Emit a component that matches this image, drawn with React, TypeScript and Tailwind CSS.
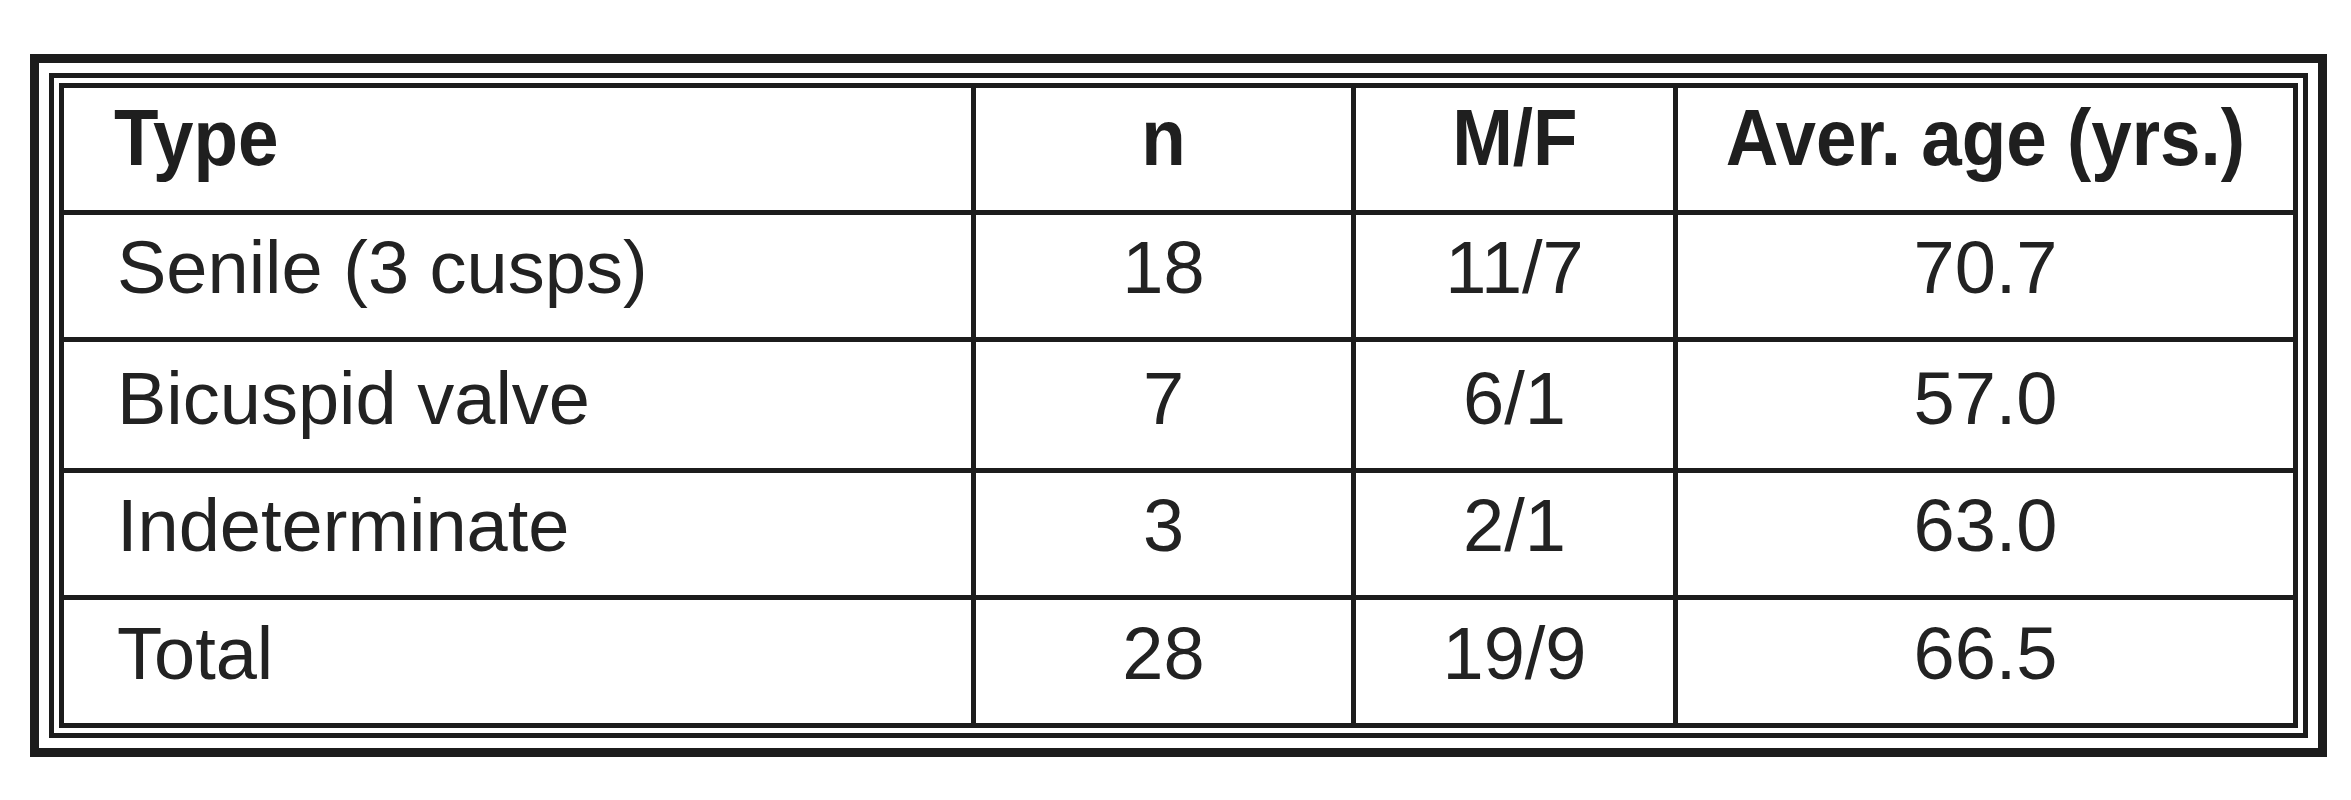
const rows = [
  { type: 'Senile (3 cusps)', n: '18', mf: '11/7', age: '70.7' },
  { type: 'Bicuspid valve', n: '7', mf: '6/1', age: '57.0' },
  { type: 'Indeterminate', n: '3', mf: '2/1', age: '63.0' },
  { type: 'Total', n: '28', mf: '19/9', age: '66.5' },
]

function HeadCell({ children, left }: { children: string; left?: boolean }) {
  return (
    <div className={`flex items-end bg-white pb-[32px] ${left ? 'justify-start pl-[50px]' : 'justify-center'}`}>
      <span
        className={`inline-block scale-x-[0.91] text-[80px] font-bold leading-none text-[#1f1f1f] ${left ? 'origin-left' : 'origin-center'}`}
      >
        {children}
      </span>
    </div>
  )
}

function Cell({ children, left }: { children: string; left?: boolean }) {
  return (
    <div
      className={`flex items-end bg-white pb-[32px] text-[74px] leading-none text-[#222] ${left ? 'justify-start pl-[53px]' : 'justify-center'}`}
    >
      {children}
    </div>
  )
}

export default function App() {
  return (
    <div className="h-[800px] w-[2351px] bg-white pl-[30px] pt-[54px]" style={{ fontFamily: '"Liberation Sans", Arial, sans-serif' }}>
      <div className="w-[2297px] border-[9px] border-[#1c1c1c] p-[10px]">
        <div className="border-[5px] border-[#1c1c1c] p-[5px]">
          <div className="grid grid-cols-[907px_375px_317px_615px] grid-rows-[122px_122px_126px_122px_123px] gap-[5px] border-[5px] border-[#1c1c1c] bg-[#1c1c1c]">
            <HeadCell left>Type</HeadCell>
            <HeadCell>n</HeadCell>
            <HeadCell>M/F</HeadCell>
            <HeadCell>Aver. age (yrs.)</HeadCell>
            {rows.map((r) => [
              <Cell key={r.type + 't'} left>{r.type}</Cell>,
              <Cell key={r.type + 'n'}>{r.n}</Cell>,
              <Cell key={r.type + 'm'}>{r.mf}</Cell>,
              <Cell key={r.type + 'a'}>{r.age}</Cell>,
            ])}
          </div>
        </div>
      </div>
    </div>
  )
}
